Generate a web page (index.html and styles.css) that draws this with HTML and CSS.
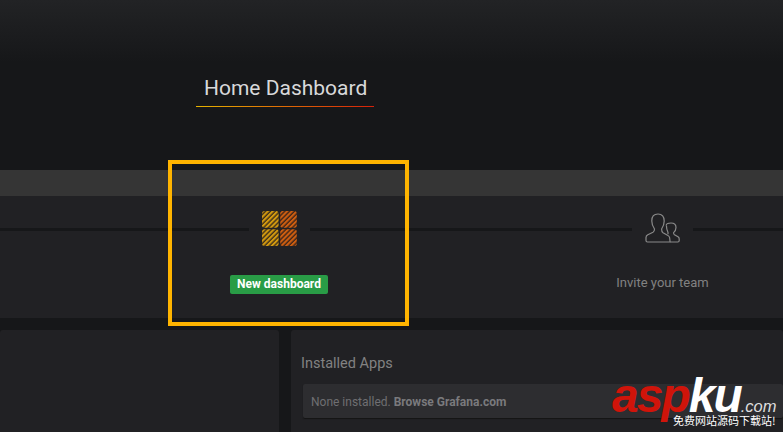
FILE: index.html
```html
<!DOCTYPE html>
<html lang="en">
<head>
<meta charset="utf-8">
<title>Home Dashboard</title>
<link rel="stylesheet" href="styles.css">
</head>
<body>
<header class="page-header">
  <h1 class="page-title">Home Dashboard</h1>
</header>
<div class="progress-bar"></div>
<section class="steps">
  <div class="step">
    <div class="step-icon">
      <svg width="35" height="35" viewBox="0 0 35 35" aria-hidden="true">
        <defs>
          <pattern id="hatch-y" width="3.4" height="3.4" patternUnits="userSpaceOnUse" patternTransform="rotate(45)">
            <rect width="3.4" height="3.4" fill="#40311a"/>
            <rect width="2" height="3.4" fill="#d39a0f"/>
          </pattern>
          <pattern id="hatch-o" width="3.4" height="3.4" patternUnits="userSpaceOnUse" patternTransform="rotate(45)">
            <rect width="3.4" height="3.4" fill="#40261a"/>
            <rect width="2" height="3.4" fill="#cf5f10"/>
          </pattern>
        </defs>
        <rect x="0" y="0" width="16.6" height="16.8" rx="2.5" fill="url(#hatch-y)"/>
        <rect x="18.2" y="0" width="16.6" height="16.8" rx="2.5" fill="url(#hatch-o)"/>
        <rect x="0" y="18.2" width="16.6" height="16.8" rx="2.5" fill="url(#hatch-y)"/>
        <rect x="18.2" y="18.2" width="16.6" height="16.8" rx="2.5" fill="url(#hatch-o)"/>
      </svg>
    </div>
    <a class="btn-new">New dashboard</a>
  </div>
  <div class="step">
    <div class="step-icon">
      <svg width="36" height="31" viewBox="0 0 36 31" fill="none" stroke="#8a8a8a" stroke-width="1.2" aria-hidden="true">
        <path d="M2.5 29H24.5Q25.2 29 25 28L24.6 24.5Q24.3 23 22.5 22.2L18 19.8Q16.6 18.8 16.6 16Q19.2 12.5 19.2 8Q19.2 1 13 1Q6.8 1 6.8 8Q6.8 12.5 9.5 16Q9.5 18.5 8 19.3L2.8 21.7Q1 22.6 1 24.5V27.5Q1 29 2.5 29Z"/>
        <path d="M21.2 12.5Q21.2 10 26 10Q31 10 31 14.5Q31 17.5 28.6 19.6Q28.4 21 29.5 21.8L33 23.8Q34.2 24.5 34.2 26V27.5Q34.2 29 32.8 29H25"/>
        <path d="M21.4 12.5Q21.4 16 23 19.5V21.2"/>
      </svg>
    </div>
    <div class="step-label">Invite your team</div>
  </div>
</section>
<div class="panels">
  <div class="panel panel-left"></div>
  <div class="panel panel-right">
    <h2 class="panel-title">Installed Apps</h2>
    <div class="empty-note">None installed. <b>Browse Grafana.com</b></div>
  </div>
</div>
<div class="highlight"></div>
<div class="watermark">
  <div class="wm-logo"><span class="wm-red">asp</span><span class="wm-white">ku</span><span class="wm-com">.com</span></div>
  <div class="wm-sub">免费网站源码下载站!</div>
</div>
</body>
</html>
```
FILE: styles.css
```css
* { box-sizing: border-box; }
html, body { margin: 0; height: 432px; overflow: hidden; }
body {
  position: relative;
  background: #161719;
  font-family: Roboto, "Liberation Sans", sans-serif;
  color: #8e8e8e;
}
.page-header {
  height: 170px;
  padding: 71px 0 0 196px;
  background: linear-gradient(#222325 0, #161719 62px);
}
.page-title {
  width: 178px;
  height: 36px;
  margin: 0;
  padding-left: 8px;
  font-size: 21px;
  font-weight: 400;
  line-height: 35px;
  white-space: nowrap;
  color: #d8d9da;
  border-bottom: 1px solid;
  border-image: linear-gradient(90deg, #e6b400, #d5200a) 1;
}
.progress-bar { height: 26px; background: #353535; }
.steps {
  display: flex;
  height: 122px;
  padding-left: 88px;
  overflow: hidden;
  background:
    linear-gradient(#161719, #161719) 0 32px / 100% 3px no-repeat,
    #212124;
}
.step {
  flex: none;
  width: 383px;
  display: flex;
  flex-direction: column;
  align-items: center;
}
.step-icon {
  width: 61px;
  height: 35px;
  margin-top: 15px;
  display: flex;
  align-items: center;
  justify-content: center;
  background: #212124;
}
.btn-new {
  margin: 29px 1px 0 0;
  height: 19px;
  min-width: 98px;
  padding: 0 7px;
  border-radius: 2px;
  background: #299c46;
  color: #fff;
  font-size: 12px;
  font-weight: 700;
  line-height: 19px;
  text-align: center;
}
.step-label {
  margin-top: 27px;
  font-size: 13px;
  line-height: 19px;
  color: #828282;
}
.panels {
  display: flex;
  gap: 12px;
  margin-top: 12px;
  height: 102px;
}
.panel { background: #212124; border-radius: 3px 3px 0 0; }
.panel-left { width: 279px; }
.panel-right { flex: 1; padding: 24px 0 0 10px; }
.panel-title {
  margin: 0 0 10px;
  font-size: 14.5px;
  font-weight: 400;
  line-height: 20px;
  color: #828282;
}
.empty-note {
  height: 34px;
  margin-left: 2px;
  padding-left: 8px;
  background: #2d2d30;
  border-radius: 2px;
  box-shadow: 0 1px 1px #141414;
  font-size: 12px;
  line-height: 36px;
  color: #6f6f72;
}
.empty-note b { color: #7a7a7d; }
.highlight {
  position: absolute;
  left: 168px;
  top: 160px;
  width: 241px;
  height: 166px;
  border: 4px solid #ffb400;
}
.watermark {
  position: absolute;
  left: 612px;
  top: 372px;
  width: 171px;
  color: #fff;
}
.wm-logo {
  height: 41px;
  font-family: "Liberation Sans", sans-serif;
  font-style: italic;
  font-weight: 700;
  font-size: 48px;
  line-height: 48px;
  letter-spacing: -2px;
  white-space: nowrap;
}
.wm-red { color: #d0140a; }
.wm-white { color: #fff; }
.wm-com { font-size: 16.5px; line-height: 17px; font-weight: 400; letter-spacing: 0; color: #ddd; }
.wm-sub {
  margin-left: 61px;
  font-family: "Noto Sans CJK SC", sans-serif;
  font-size: 11px;
  line-height: 14px;
  white-space: nowrap;
}
```
